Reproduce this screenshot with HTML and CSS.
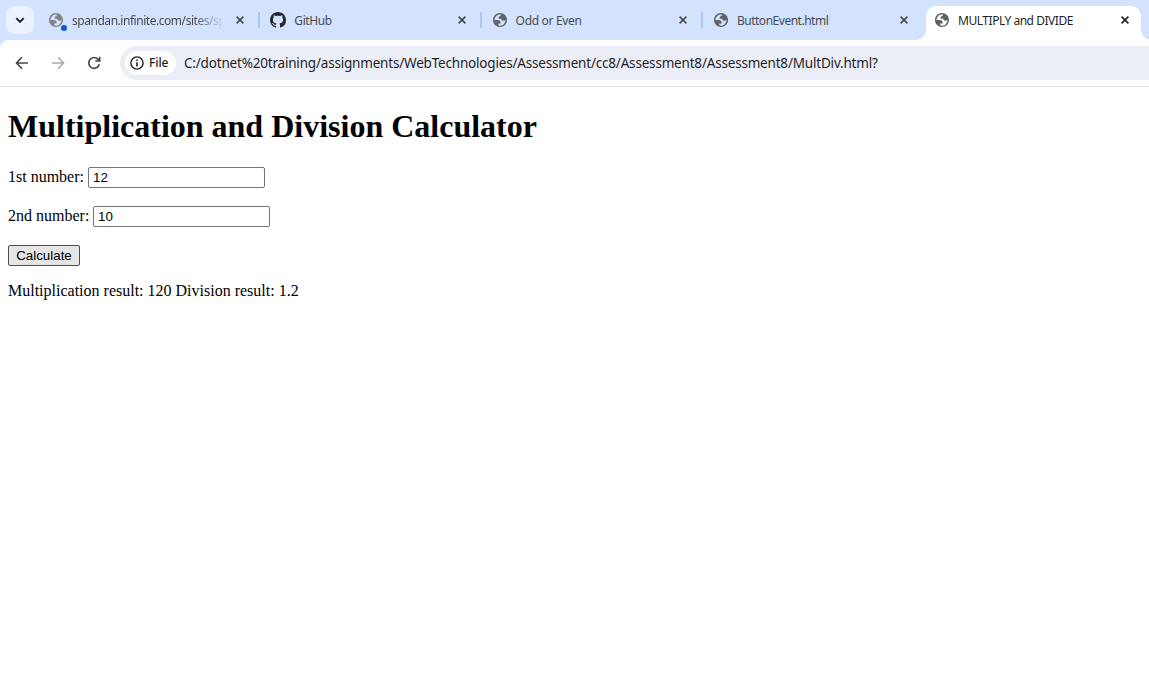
FILE: index.html
```html
<!DOCTYPE html>
<html lang="en">
<head>
<meta charset="utf-8">
<title>MULTIPLY and DIVIDE</title>
<link rel="stylesheet" href="styles.css">
</head>
<body>
<svg class="defs" width="0" height="0">
  <symbol id="globe" viewBox="2 2 20 20"><path fill-rule="evenodd" d="M12 2C6.48 2 2 6.48 2 12s4.48 10 10 10 10-4.48 10-10S17.52 2 12 2zM4 12h4.4c3.407.022 4.922 1.73 4.543 5.127H9.488v2.47a8.004 8.004 0 0 0 10.498-8.083C19.327 12.504 18.332 13 17 13c-2.137 0-3.206-.916-3.206-2.75h-3.748c-.274-2.728.683-4.092 2.87-4.092 0-.975.327-1.597.811-1.97A8.004 8.004 0 0 0 4 12z"/></symbol>
  <symbol id="close" viewBox="0 0 8 8"><path d="M.6.6l6.8 6.8M7.4.6L.6 7.4" fill="none" stroke="currentColor" stroke-width="1.6"/></symbol>
</svg>
<header class="tabstrip">
  <button class="search-tabs" aria-label="Search tabs"><svg width="10" height="7" viewBox="0 0 10 7"><path d="M1.3 1.2L5 4.9l3.7-3.7" fill="none" stroke="currentColor" stroke-width="1.9"/></svg></button>
  <div class="tab first">
    <span class="favicon muted"><svg><use href="#globe"/></svg><i class="dot"></i></span>
    <span class="title fade">spandan.infinite.com/sites/sp</span>
    <svg class="close"><use href="#close"/></svg>
  </div>
  <div class="tab">
    <span class="favicon github"><svg viewBox="0 0 16 16"><path d="M8 0C3.58 0 0 3.58 0 8c0 3.54 2.29 6.53 5.47 7.59.4.07.55-.17.55-.38 0-.19-.01-.82-.01-1.49-2.01.37-2.53-.49-2.69-.94-.09-.23-.48-.94-.82-1.13-.28-.15-.68-.52-.01-.53.63-.01 1.08.58 1.23.82.72 1.21 1.87.87 2.33.66.07-.52.28-.87.51-1.07-1.78-.2-3.64-.89-3.64-3.95 0-.87.31-1.59.82-2.15-.08-.2-.36-1.02.08-2.12 0 0 .67-.21 2.2.82.64-.18 1.32-.27 2-.27s1.36.09 2 .27c1.53-1.04 2.2-.82 2.2-.82.44 1.1.16 1.92.08 2.12.51.56.82 1.27.82 2.15 0 3.07-1.87 3.75-3.65 3.95.29.25.54.73.54 1.48 0 1.07-.01 1.93-.01 2.2 0 .21.15.46.55.38A8.01 8.01 0 0016 8c0-4.42-3.58-8-8-8z"/></svg></span>
    <span class="title t-github">GitHub</span>
    <svg class="close"><use href="#close"/></svg>
  </div>
  <div class="tab">
    <span class="favicon"><svg><use href="#globe"/></svg></span>
    <span class="title t-odd">Odd or Even</span>
    <svg class="close"><use href="#close"/></svg>
  </div>
  <div class="tab plain">
    <span class="favicon"><svg><use href="#globe"/></svg></span>
    <span class="title t-button">ButtonEvent.html</span>
    <svg class="close"><use href="#close"/></svg>
  </div>
  <div class="tab active">
    <span class="favicon"><svg><use href="#globe"/></svg></span>
    <span class="title t-mult">MULTIPLY and DIVIDE</span>
    <svg class="close"><use href="#close"/></svg>
  </div>
</header>
<nav class="toolbar">
  <svg class="nav-icon" viewBox="0 0 14 14"><path d="M13 7H2M7 1.3L1.5 7 7 12.7"/></svg>
  <svg class="nav-icon disabled" viewBox="0 0 14 14"><path d="M1 7h11M7 1.3L12.5 7 7 12.7"/></svg>
  <svg class="nav-icon" viewBox="0 0 14 14"><path d="M12.4 8.2A5.4 5.4 0 1 1 11.2 3.4L12.7 5M12.7.8V5H8.4"/></svg>
  <div class="omnibox">
    <span class="chip"><svg width="14" height="14" viewBox="0 0 14 14"><circle cx="7" cy="7" r="6.1" fill="none" stroke="currentColor" stroke-width="1.4"/><path d="M6.3 6.2h1.4v4.2H6.3zM6.3 3.6h1.4V5H6.3z"/></svg><span class="chip-text">File</span></span>
    <span class="url">C:/dotnet%20training/assignments/WebTechnologies/Assessment/cc8/Assessment8/Assessment8/MultDiv.html?</span>
  </div>
</nav>
<main class="page">
  <h1>Multiplication and Division Calculator</h1>
  <form>
    <div class="row"><label for="first">1st number:</label><input id="first" type="text" value="12"></div>
    <div class="row"><label for="second" class="second">2nd number:</label><input id="second" type="text" value="10"></div>
    <button type="button" class="calculate">Calculate</button>
  </form>
  <p class="result">Multiplication result: 120 Division result: 1.2</p>
</main>
</body>
</html>
```
FILE: styles.css
```css
* { box-sizing: border-box; }
body {
  margin: 0;
  height: 692px;
  overflow: hidden;
  background: #fff;
  color: #000;
  font-family: "Liberation Serif", serif;
}
.defs { display: block; }
.tabstrip {
  display: flex;
  height: 40px;
  padding-left: 6px;
  background: #d3e2fd;
  font: 12px/16px "Noto Sans", "Open Sans", sans-serif;
  color: #474b50;
}
.search-tabs {
  flex: none;
  display: flex;
  align-items: center;
  justify-content: center;
  width: 28px;
  height: 28px;
  margin: 6px 4px 0 0;
  padding: 0;
  border: 0;
  border-radius: 9px;
  background: #edf3fe;
  color: #1f1f1f;
}
.tab {
  position: relative;
  flex: none;
  display: flex;
  align-items: center;
  width: 221.3px;
  height: 40px;
  padding: 0 15px 0 11px;
}
.tab::after {
  content: "";
  position: absolute;
  right: -1px;
  top: 12px;
  width: 2px;
  height: 16px;
  background: #a8c7fa;
}
.tab.plain::after { display: none; }
.favicon {
  position: relative;
  flex: none;
  width: 16px;
  height: 16px;
  padding: 1px;
  margin-right: 8px;
  fill: #5f6368;
}
.favicon svg { display: block; width: 14px; height: 14px; }
.favicon.github { padding: 0; fill: #24292f; }
.favicon.github svg { width: 16px; height: 16px; }
.tab.first .favicon { left: -1px; margin-right: 7px; }
.favicon.muted { fill: #808387; }
.dot {
  position: absolute;
  left: 13px;
  top: 13px;
  width: 6px;
  height: 6px;
  border-radius: 50%;
  background: #0b57d0;
}
.title {
  flex: 1;
  min-width: 0;
  white-space: nowrap;
  margin-right: 12px;
  padding-top: 1px;
}
.title.fade {
  letter-spacing: -0.46px;
  mask-image: linear-gradient(to right, #000 122px, transparent 152px);
}
.t-github { letter-spacing: -0.4px; }
.t-odd { letter-spacing: -0.32px; }
.t-button { letter-spacing: -0.48px; }
.t-mult { letter-spacing: -0.46px; }
.close { flex: none; width: 8px; height: 8px; color: #474b50; }
.tab.active {
  width: 215px;
  height: 34px;
  margin: 6px 0 0 2.8px;
  padding: 0 12px 6px 8px;
  border-radius: 10px 10px 0 0;
  background: #fff;
  color: #1f1f1f;
}
.tab.active::before,
.tab.active::after {
  content: "";
  position: absolute;
  top: auto;
  bottom: 0;
  width: 10px;
  height: 10px;
}
.tab.active::before {
  left: -10px;
  background: radial-gradient(circle at 0 0, transparent 9.5px, #fff 10px);
}
.tab.active::after {
  right: -10px;
  background: radial-gradient(circle at 100% 0, transparent 9.5px, #fff 10px);
}
.tab.active .close { color: #1f1f1f; }
.toolbar {
  display: flex;
  align-items: center;
  height: 47px;
  padding-left: 15px;
  border-bottom: 1px solid #dfe1e5;
  background: radial-gradient(circle at 8px 8px, #fff 7.5px, #d3e2fd 8px) 0 0 / 8px 8px no-repeat, #fff;
}
.nav-icon {
  flex: none;
  width: 14px;
  height: 14px;
  margin-right: 22px;
  fill: none;
  stroke: #474747;
  stroke-width: 1.6;
}
.nav-icon.disabled { stroke: #ababab; }
.nav-icon + .omnibox { margin-left: -3px; }
.omnibox {
  flex: 1;
  display: flex;
  align-items: center;
  height: 34px;
  padding-left: 5px;
  border-radius: 17px 0 0 17px;
  background: #ebeef7;
  font: 13.5px/20px "Noto Sans", "Open Sans", sans-serif;
  color: #1f1f1f;
}
.chip {
  display: flex;
  align-items: center;
  gap: 5px;
  width: 51px;
  height: 24px;
  padding-left: 5px;
  border-radius: 12px;
  background: #fff;
  font-size: 12px;
  font-weight: 500;
}
.chip-text { letter-spacing: -0.1px; }
.url {
  margin-left: 8px;
  white-space: nowrap;
  letter-spacing: -0.19px;
}
.page { padding: 0 8px; font-size: 16px; }
h1 {
  margin: 21px 0 22px;
  font-size: 32px;
  line-height: 37px;
}
.row {
  display: flex;
  align-items: center;
  height: 21px;
  margin-bottom: 18px;
}
.row label { width: 80px; padding-bottom: 2px; white-space: nowrap; }
.row label.second { width: 85px; }
.row input {
  width: 177px;
  height: 21px;
  padding: 1px 3px 1px 4px;
  border: 1px solid #767676;
  border-radius: 2px;
  font: 13.333px "Liberation Sans", sans-serif;
}
.calculate {
  display: block;
  width: 72px;
  height: 21px;
  padding: 0;
  border: 1px solid #4f4f4f;
  border-radius: 2px;
  background: #e5e5e5;
  color: #000;
  font: 13.333px "Liberation Sans", sans-serif;
}
.result { margin: 16px 0 0; line-height: 18px; }
```
